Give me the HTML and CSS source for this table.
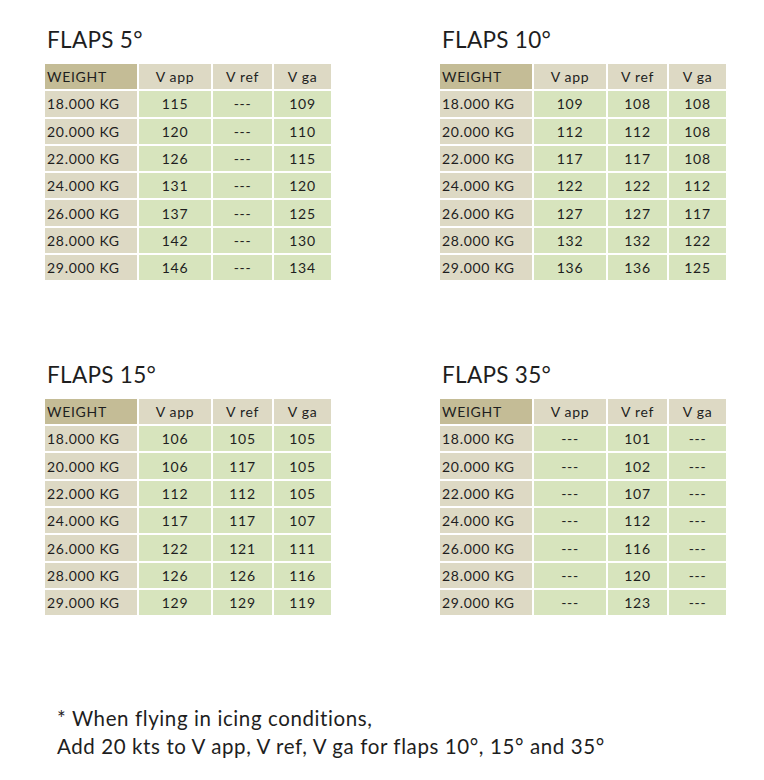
FILE: index.html
```html
<!DOCTYPE html>
<html>
<head>
<meta charset="utf-8">
<link rel="stylesheet" href="styles.css">
</head>
<body>
<main class="page">
  <section class="charts">
    <div class="chart">
      <h2 class="title">FLAPS 5°</h2>
      <div class="tbl">
        <div class="c hw">WEIGHT</div><div class="c h">V app</div><div class="c h">V ref</div><div class="c h">V ga</div>
        <div class="c w">18.000 KG</div><div class="c d">115</div><div class="c d">---</div><div class="c d">109</div>
        <div class="c w">20.000 KG</div><div class="c d">120</div><div class="c d">---</div><div class="c d">110</div>
        <div class="c w">22.000 KG</div><div class="c d">126</div><div class="c d">---</div><div class="c d">115</div>
        <div class="c w">24.000 KG</div><div class="c d">131</div><div class="c d">---</div><div class="c d">120</div>
        <div class="c w">26.000 KG</div><div class="c d">137</div><div class="c d">---</div><div class="c d">125</div>
        <div class="c w">28.000 KG</div><div class="c d">142</div><div class="c d">---</div><div class="c d">130</div>
        <div class="c w">29.000 KG</div><div class="c d">146</div><div class="c d">---</div><div class="c d">134</div>
      </div>
    </div>
    <div class="chart">
      <h2 class="title">FLAPS 10°</h2>
      <div class="tbl">
        <div class="c hw">WEIGHT</div><div class="c h">V app</div><div class="c h">V ref</div><div class="c h">V ga</div>
        <div class="c w">18.000 KG</div><div class="c d">109</div><div class="c d">108</div><div class="c d">108</div>
        <div class="c w">20.000 KG</div><div class="c d">112</div><div class="c d">112</div><div class="c d">108</div>
        <div class="c w">22.000 KG</div><div class="c d">117</div><div class="c d">117</div><div class="c d">108</div>
        <div class="c w">24.000 KG</div><div class="c d">122</div><div class="c d">122</div><div class="c d">112</div>
        <div class="c w">26.000 KG</div><div class="c d">127</div><div class="c d">127</div><div class="c d">117</div>
        <div class="c w">28.000 KG</div><div class="c d">132</div><div class="c d">132</div><div class="c d">122</div>
        <div class="c w">29.000 KG</div><div class="c d">136</div><div class="c d">136</div><div class="c d">125</div>
      </div>
    </div>
    <div class="chart">
      <h2 class="title">FLAPS 15°</h2>
      <div class="tbl">
        <div class="c hw">WEIGHT</div><div class="c h">V app</div><div class="c h">V ref</div><div class="c h">V ga</div>
        <div class="c w">18.000 KG</div><div class="c d">106</div><div class="c d">105</div><div class="c d">105</div>
        <div class="c w">20.000 KG</div><div class="c d">106</div><div class="c d">117</div><div class="c d">105</div>
        <div class="c w">22.000 KG</div><div class="c d">112</div><div class="c d">112</div><div class="c d">105</div>
        <div class="c w">24.000 KG</div><div class="c d">117</div><div class="c d">117</div><div class="c d">107</div>
        <div class="c w">26.000 KG</div><div class="c d">122</div><div class="c d">121</div><div class="c d">111</div>
        <div class="c w">28.000 KG</div><div class="c d">126</div><div class="c d">126</div><div class="c d">116</div>
        <div class="c w">29.000 KG</div><div class="c d">129</div><div class="c d">129</div><div class="c d">119</div>
      </div>
    </div>
    <div class="chart">
      <h2 class="title">FLAPS 35°</h2>
      <div class="tbl">
        <div class="c hw">WEIGHT</div><div class="c h">V app</div><div class="c h">V ref</div><div class="c h">V ga</div>
        <div class="c w">18.000 KG</div><div class="c d">---</div><div class="c d">101</div><div class="c d">---</div>
        <div class="c w">20.000 KG</div><div class="c d">---</div><div class="c d">102</div><div class="c d">---</div>
        <div class="c w">22.000 KG</div><div class="c d">---</div><div class="c d">107</div><div class="c d">---</div>
        <div class="c w">24.000 KG</div><div class="c d">---</div><div class="c d">112</div><div class="c d">---</div>
        <div class="c w">26.000 KG</div><div class="c d">---</div><div class="c d">116</div><div class="c d">---</div>
        <div class="c w">28.000 KG</div><div class="c d">---</div><div class="c d">120</div><div class="c d">---</div>
        <div class="c w">29.000 KG</div><div class="c d">---</div><div class="c d">123</div><div class="c d">---</div>
      </div>
    </div>
  </section>
  <p class="note">* When flying in icing conditions,<br>Add 20 kts to V app, V ref, V ga for flaps 10°, 15° and 35°</p>
</main>
</body>
</html>
```

FILE: styles.css
```css
html, body {
  margin: 0;
  padding: 0;
  background: #ffffff;
}

.page {
  padding: 25px 0 0 45px;
  font-family: Lato, "Open Sans", "Liberation Sans", sans-serif;
  color: #1e1e1e;
}

.charts {
  display: grid;
  grid-template-columns: 286px 286px;
  column-gap: 109px;
  row-gap: 79.5px;
}

.title {
  margin: 0 0 9px 2px;
  font-size: 22.5px;
  line-height: 30px;
  font-weight: 400;
  letter-spacing: 0.3px;
}

.tbl {
  display: grid;
  grid-template-columns: 92px 72px 59px 57px;
  grid-auto-rows: 25.3px;
  gap: 2px;
  font-size: 14px;
  letter-spacing: 0.7px;
}

.c {
  display: flex;
  align-items: center;
  justify-content: center;
}

.hw {
  background: #c4bc96;
  justify-content: flex-start;
  padding-left: 2px;
}

.h {
  background: #ddd9c4;
}

.w {
  background: #ddd9c4;
  justify-content: flex-start;
  padding-left: 2px;
}

.d {
  background: #d7e4bd;
}

.note {
  margin: 89px 0 0 12px;
  font-size: 20.5px;
  line-height: 28px;
  letter-spacing: 0.6px;
}
```
